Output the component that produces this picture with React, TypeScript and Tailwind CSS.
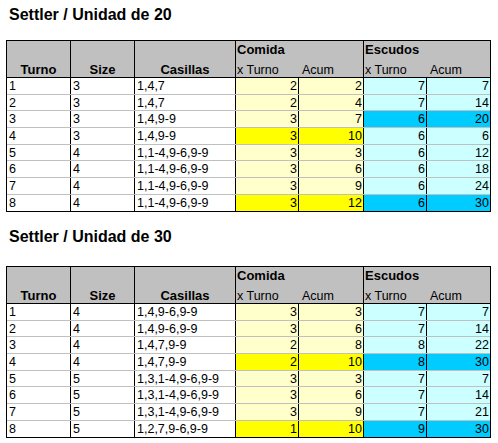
import React from "react";

type Row = {
  turno: string;
  size: string;
  casillas: string;
  cTurno: string;
  cAcum: string;
  eTurno: string;
  eAcum: string;
  hiC?: boolean;
  hiE?: boolean;
  h: string;
};

const HEIGHTS = ["h-[17px]", "h-[16px]", "h-[17px]", "h-[17px]", "h-[16px]", "h-[17px]", "h-[17px]", "h-[16px]"];

const UNIDAD_20: Omit<Row, "h">[] = [
  { turno: "1", size: "3", casillas: "1,4,7", cTurno: "2", cAcum: "2", eTurno: "7", eAcum: "7" },
  { turno: "2", size: "3", casillas: "1,4,7", cTurno: "2", cAcum: "4", eTurno: "7", eAcum: "14" },
  { turno: "3", size: "3", casillas: "1,4,9-9", cTurno: "3", cAcum: "7", eTurno: "6", eAcum: "20", hiE: true },
  { turno: "4", size: "3", casillas: "1,4,9-9", cTurno: "3", cAcum: "10", eTurno: "6", eAcum: "6", hiC: true },
  { turno: "5", size: "4", casillas: "1,1-4,9-6,9-9", cTurno: "3", cAcum: "3", eTurno: "6", eAcum: "12" },
  { turno: "6", size: "4", casillas: "1,1-4,9-6,9-9", cTurno: "3", cAcum: "6", eTurno: "6", eAcum: "18" },
  { turno: "7", size: "4", casillas: "1,1-4,9-6,9-9", cTurno: "3", cAcum: "9", eTurno: "6", eAcum: "24" },
  { turno: "8", size: "4", casillas: "1,1-4,9-6,9-9", cTurno: "3", cAcum: "12", eTurno: "6", eAcum: "30", hiC: true, hiE: true },
];

const UNIDAD_30: Omit<Row, "h">[] = [
  { turno: "1", size: "4", casillas: "1,4,9-6,9-9", cTurno: "3", cAcum: "3", eTurno: "7", eAcum: "7" },
  { turno: "2", size: "4", casillas: "1,4,9-6,9-9", cTurno: "3", cAcum: "6", eTurno: "7", eAcum: "14" },
  { turno: "3", size: "4", casillas: "1,4,7,9-9", cTurno: "2", cAcum: "8", eTurno: "8", eAcum: "22" },
  { turno: "4", size: "4", casillas: "1,4,7,9-9", cTurno: "2", cAcum: "10", eTurno: "8", eAcum: "30", hiC: true, hiE: true },
  { turno: "5", size: "5", casillas: "1,3,1-4,9-6,9-9", cTurno: "3", cAcum: "3", eTurno: "7", eAcum: "7" },
  { turno: "6", size: "5", casillas: "1,3,1-4,9-6,9-9", cTurno: "3", cAcum: "6", eTurno: "7", eAcum: "14" },
  { turno: "7", size: "5", casillas: "1,3,1-4,9-6,9-9", cTurno: "3", cAcum: "9", eTurno: "7", eAcum: "21" },
  { turno: "8", size: "5", casillas: "1,2,7,9-6,9-9", cTurno: "1", cAcum: "10", eTurno: "9", eAcum: "30", hiC: true, hiE: true },
];

function HeaderCol({ label, w }: { label: string; w: string }) {
  return (
    <div className={`${w} border-r border-black flex flex-col justify-end`}>
      <div className="h-[18px] leading-[18px] pt-[2px] text-center font-bold text-[13px]">{label}</div>
    </div>
  );
}

function Group({ label, last }: { label: string; last?: boolean }) {
  return (
    <div className={`flex flex-col ${last ? "w-[126px]" : "w-[128px] border-r border-black"}`}>
      <div className="h-[18px] leading-[18px] pl-[1px] font-bold text-[13px]">{label}</div>
      <div className="h-[18px] leading-[18px] pt-[2px] flex text-[12.5px]">
        <span className="w-[63px] pl-[1px]">x Turno</span>
        <span className="pl-[3px]">Acum</span>
      </div>
    </div>
  );
}

function SettlerTable({ rows }: { rows: Omit<Row, "h">[] }) {
  return (
    <div className="ml-[6px] w-[485px] border border-black">
      <div className="h-[37px] flex bg-[#c0c0c0] border-b border-black">
        <HeaderCol label="Turno" w="w-[64px]" />
        <HeaderCol label="Size" w="w-[64px]" />
        <HeaderCol label="Casillas" w="w-[101px]" />
        <Group label="Comida" />
        <Group label="Escudos" last />
      </div>
      {rows.map((r, i) => {
        const last = i === rows.length - 1;
        const c = r.hiC ? "bg-[#ffff00]" : "bg-[#ffffcc]";
        const e = r.hiE ? "bg-[#00ccff]" : "bg-[#ccffff]";
        return (
          <div
            key={r.turno}
            className={`flex text-[12.5px] leading-[16px] ${HEIGHTS[i]} ${last ? "" : "border-b border-[#c0c0c0]"}`}
          >
            <div className="w-[64px] pl-[2px] border-r border-black">{r.turno}</div>
            <div className="w-[64px] pl-[2px] border-r border-black">{r.size}</div>
            <div className="w-[101px] pl-[2px] border-r border-black">{r.casillas}</div>
            <div className={`w-[63px] pr-[1px] text-right border-r border-black ${c}`}>{r.cTurno}</div>
            <div className={`w-[65px] pr-[1px] text-right border-r border-black ${c}`}>{r.cAcum}</div>
            <div className={`w-[63px] pr-[1px] text-right border-r border-black ${e}`}>{r.eTurno}</div>
            <div className={`w-[63px] pr-[1px] text-right ${e}`}>{r.eAcum}</div>
          </div>
        );
      })}
    </div>
  );
}

export default function App() {
  return (
    <div className="w-[498px] h-[443px] bg-white text-black pt-[5px] font-['Liberation_Sans',Arial,sans-serif]">
      <h1 className="pl-[9px] text-[16px] leading-[20px] font-bold">Settler / Unidad de 20</h1>
      <div className="mt-[15px]">
        <SettlerTable rows={UNIDAD_20} />
      </div>
      <h1 className="mt-[15px] pl-[9px] text-[16px] leading-[20px] font-bold">Settler / Unidad de 30</h1>
      <div className="mt-[19px]">
        <SettlerTable rows={UNIDAD_30} />
      </div>
    </div>
  );
}
